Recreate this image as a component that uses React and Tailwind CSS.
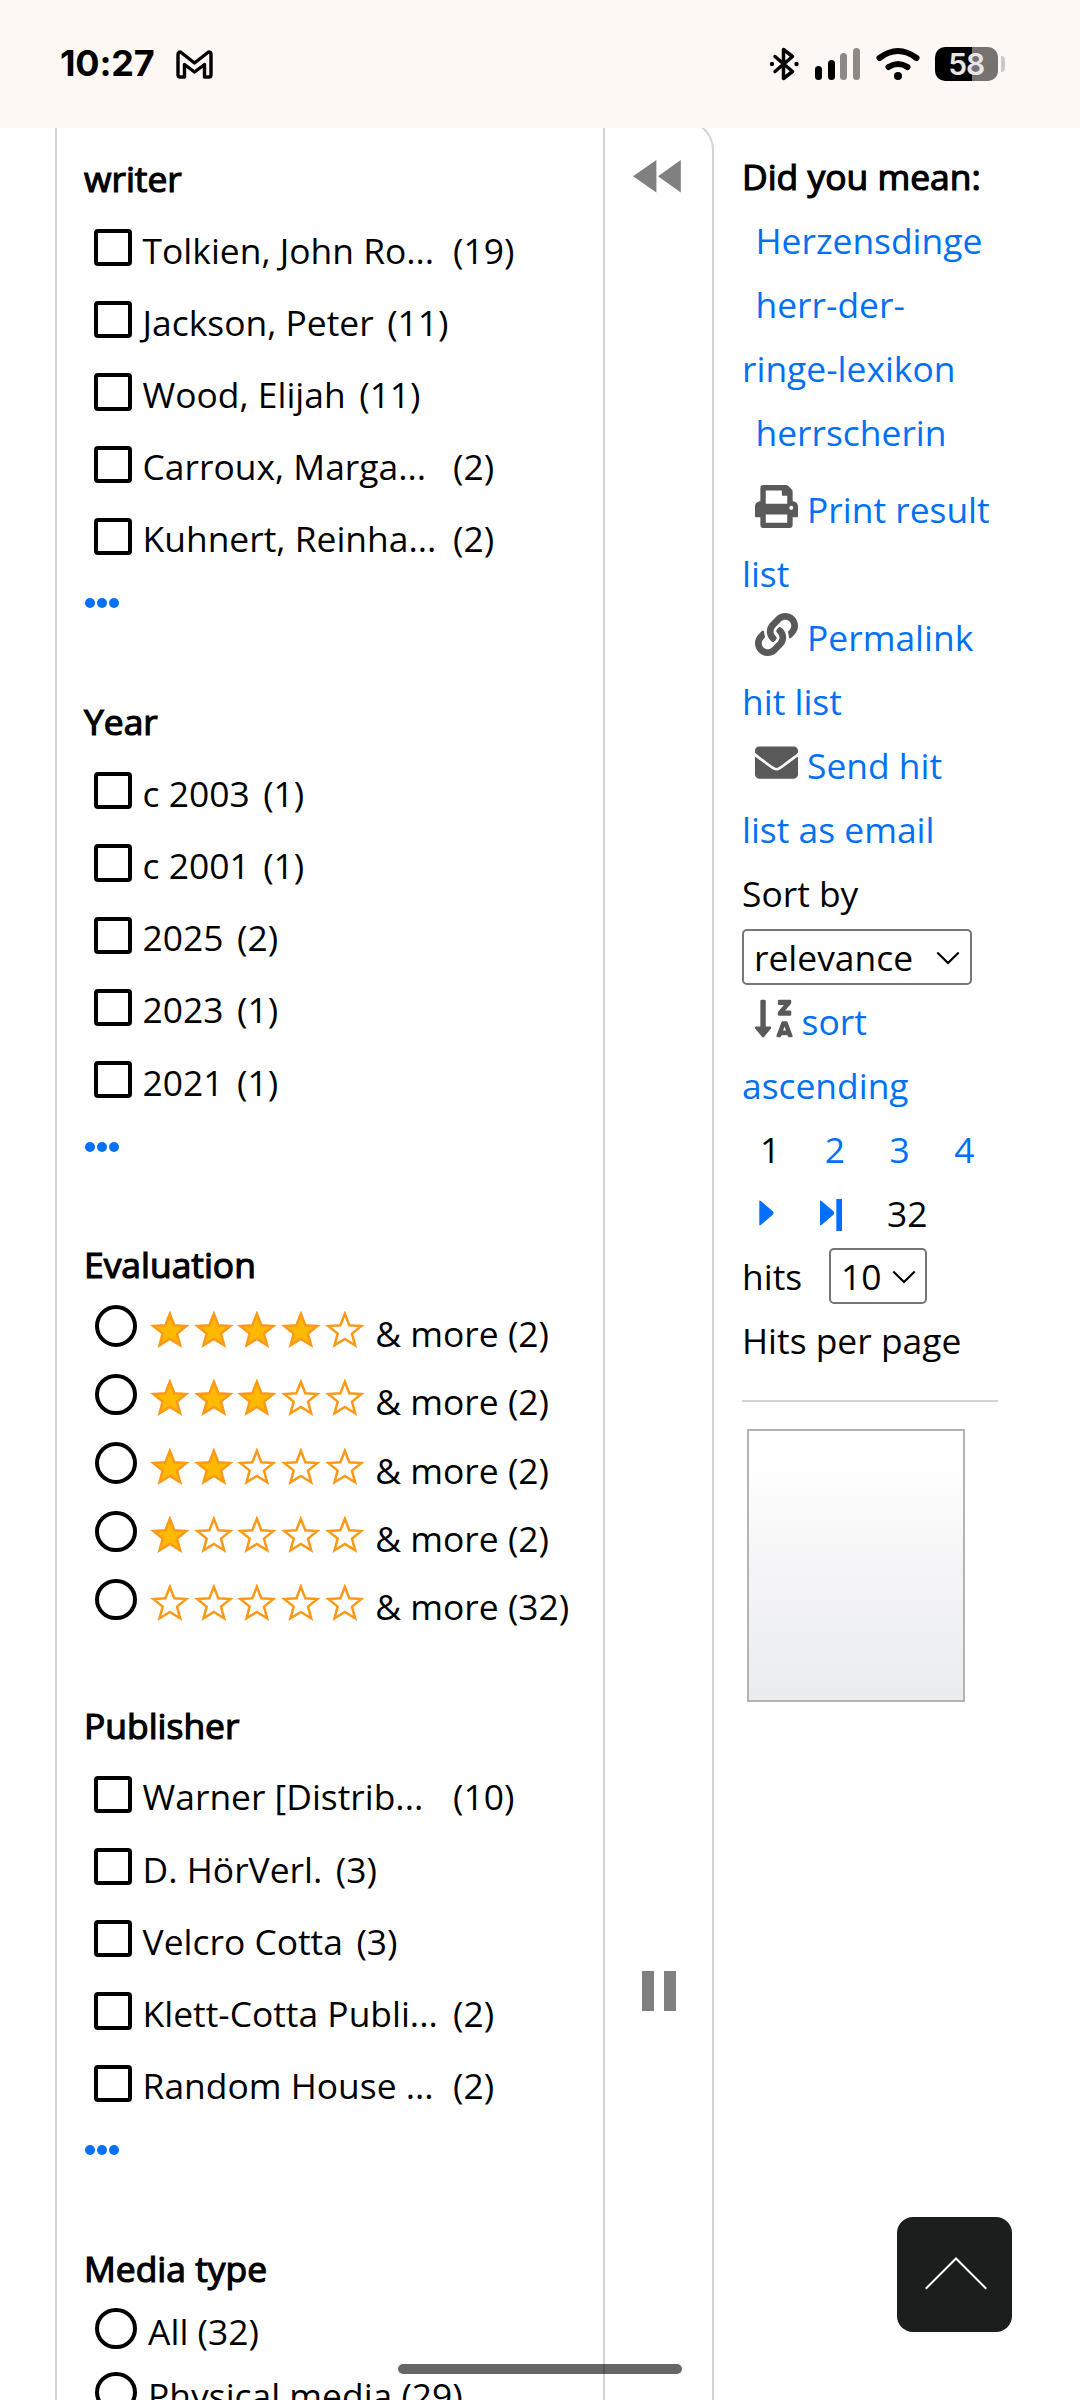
import { FaEnvelope, FaLink, FaPrint, FaSortAlphaDownAlt } from "react-icons/fa";

const writers = [
  { label: "Tolkien, John Ro...", count: 19, cut: true },
  { label: "Jackson, Peter", count: 11 },
  { label: "Wood, Elijah", count: 11 },
  { label: "Carroux, Marga...", count: 2, cut: true },
  { label: "Kuhnert, Reinha...", count: 2, cut: true },
];

const years = [
  { label: "c 2003", count: 1 },
  { label: "c 2001", count: 1 },
  { label: "2025", count: 2 },
  { label: "2023", count: 1 },
  { label: "2021", count: 1 },
];

const publishers = [
  { label: "Warner [Distrib...", count: 10, cut: true },
  { label: "D. HörVerl.", count: 3 },
  { label: "Velcro Cotta", count: 3 },
  { label: "Klett-Cotta Publi...", count: 2, cut: true },
  { label: "Random House ...", count: 2, cut: true },
];

const ratings = [[4, 2], [3, 2], [2, 2], [1, 2], [0, 32]];

function StatusBar() {
  return (
    <header className="relative z-10 flex h-[128px] shrink-0 items-start bg-[#fef8f4] pl-[60px] text-black">
      <span className="mt-[41px] w-[116px] font-[Inter] text-[36px] leading-[44px] font-bold tracking-[-0.200px]">10:27</span>
      <svg className="mt-[50px] h-[29px] w-[37px]" viewBox="0 0 37 29" fill="none" stroke="currentColor" strokeWidth="3.4" strokeLinejoin="round">
        <path d="M2 25V4.5Q2 2 4.5 2L18.5 13 32.500 2Q35 2 35 4.500V25Q35 27 33 27H28.500V14.500L18.500 22 8.500 14.500V27H4Q2 27 2 25Z" />
      </svg>
      <svg className="mt-[47px] ml-[556px] h-[34px] w-[31px]" viewBox="0 0 31 34" fill="none" stroke="currentColor" strokeWidth="3.500" strokeLinejoin="round" strokeLinecap="round">
        <path d="M6 9.500 23.500 24.500 14.500 31.500V2.500L23.500 9.500 6 24.500" />
        <circle cx="3" cy="17" r="2.200" fill="currentColor" stroke="none" />
        <circle cx="27.500" cy="17" r="2.200" fill="currentColor" stroke="none" />
      </svg>
      <div className="mt-[48px] ml-[15px] flex h-[32px] items-end gap-[5.600px]">
        <i className="h-[14px] w-[7px] rounded-full bg-black" />
        <i className="h-[20px] w-[7px] rounded-full bg-black" />
        <i className="h-[27px] w-[7px] rounded-full bg-[#8d8986]" />
        <i className="h-[32px] w-[7px] rounded-full bg-[#8d8986]" />
      </div>
      <svg className="mt-[47px] ml-[16px] h-[34px] w-[44px]" viewBox="0 0 44 34" fill="none" stroke="currentColor" strokeWidth="6" strokeLinecap="round">
        <path d="M3.500 11Q22 -3 40.500 11M12.500 20Q22 14 31.500 20" />
        <circle cx="22" cy="29" r="4" fill="currentColor" stroke="none" />
      </svg>
      <div className="mt-[47px] ml-[15px] flex h-[34px] w-[63px] items-center justify-center rounded-[10px] bg-[linear-gradient(90deg,#000_58%,#757270_58%)] font-[Inter] text-[30px] font-semibold tracking-[-1px] text-[#e6e6e6]">
        58
      </div>
      <div className="mt-[56px] ml-[3px] h-[16px] w-[4px] rounded-r-[4px] bg-[#cdc8c5]" />
    </header>
  );
}

function Title({ children }) {
  return <h2 className="h-[64px] leading-[64px] [-webkit-text-stroke:1.200px_black]">{children}</h2>;
}

function Radio({ className }) {
  return <span className={`h-[41.500px] w-[41.500px] shrink-0 rounded-full border-[4px] border-black ${className}`} />;
}

function CheckGroup({ title, items }) {
  return (
    <section className="h-[543.300px]">
      <Title>{title}</Title>
      <div className="pt-[3.800px]">
        {items.map((item) => (
          <label key={item.label} className="flex h-[72.200px] items-start pl-[10.400px] leading-[72.200px]">
            <span className="mt-[15.400px] h-[37.200px] w-[37.200px] shrink-0 rounded-[4px] border-[4px] border-black" />
            <span className={item.cut ? "ml-[11px] w-[297px]" : "ml-[11px]"}>{item.label}</span>
            <span className="ml-[13.500px]">({item.count})</span>
          </label>
        ))}
      </div>
      <div className="mt-[23.800px] flex gap-[2.200px] pl-[0.500px]">
        <i className="h-[10px] w-[10px] rounded-full bg-[#0070ff]" />
        <i className="h-[10px] w-[10px] rounded-full bg-[#0070ff]" />
        <i className="h-[10px] w-[10px] rounded-full bg-[#0070ff]" />
      </div>
    </section>
  );
}

function Star({ filled }) {
  return (
    <svg className="h-[37px] w-[43.700px]" viewBox="0 0 43.700 37">
      <path
        d="M21.850 2.800 26.300 14.200 38.400 15 29 22.600 32.200 34.300 21.850 28 11.500 34.300 14.700 22.600 5.300 15 17.400 14.200Z"
        fill={filled ? "#ffb900" : "none"}
        stroke="#fa9a17"
        strokeWidth="2.500"
      />
    </svg>
  );
}

function Filters() {
  return (
    <div className="w-[546px] pt-[23.800px] pl-[27px]">
      <CheckGroup title="writer" items={writers} />
      <CheckGroup title="Year" items={years} />
      <section className="h-[460.200px]">
        <Title>Evaluation</Title>
        <div className="pt-[2.500px]">
          {ratings.map(([stars, count]) => (
            <label key={stars} className="flex h-[68.400px] items-start pl-[11.400px] leading-[68.400px]">
              <Radio className="mt-[6.500px]" />
              <span className="mt-[12px] ml-[11px] flex">
                {[0, 1, 2, 3, 4].map((i) => <Star key={i} filled={i < stars} />)}
              </span>
              <span className="ml-[9px]">&amp; more ({count})</span>
            </label>
          ))}
        </div>
      </section>
      <CheckGroup title="Publisher" items={publishers} />
      <section>
        <Title>Media type</Title>
        {["All (32)", "Physical media (29)"].map((label) => (
          <label key={label} className="-mt-[1.300px] mb-[1.300px] flex h-[64px] items-start pl-[11.400px] leading-[64px]">
            <Radio className="mt-[9px]" />
            <span className="ml-[11.200px]">{label}</span>
          </label>
        ))}
      </section>
    </div>
  );
}

function Handle() {
  return (
    <div className="w-[109px] border-l-2 border-[#d3d3d3] text-[#808080]">
      <svg className="mt-[38px] ml-[28px] h-[33px] w-[48px]" viewBox="0 0 48 33" fill="currentColor">
        <path d="M0 16.200 23.400 0V32.400ZM25 16.200 47.800 0V32.400Z" />
      </svg>
      <div className="mt-[1778px] ml-[37px] flex gap-[10px]">
        <i className="h-[40px] w-[12px] bg-[#808080]" />
        <i className="h-[40px] w-[12px] bg-[#808080]" />
      </div>
    </div>
  );
}

function Chevron({ className }) {
  return (
    <svg className={`h-[14px] w-[24px] ${className}`} viewBox="0 0 24 14" fill="none" stroke="black" strokeWidth="2.200">
      <path d="M1.300 1.500 12 12 22.700 1.500" />
    </svg>
  );
}

function IconLink({ icon: Icon, size, text, rest }) {
  return (
    <a className="block text-[#0070f5]">
      <span className="flex items-start pl-[13px]">
        <Icon className={`mt-[8.700px] text-[#595959] ${size}`} />
        {text}
      </span>
      <span className="block">{rest}</span>
    </a>
  );
}

function Results() {
  return (
    <aside className="ml-[28px] w-[256px] pt-[24px] leading-[64px]">
      <h2 className="whitespace-nowrap [-webkit-text-stroke:1.200px_black]">Did you mean:</h2>
      <div className="mb-[12.700px] text-[#0070f5]">
        <a className="block pl-[13.500px]">Herzensdinge</a>
        <a className="block"><span className="pl-[13.500px]">herr-der-</span><br />ringe-lexikon</a>
        <a className="block pl-[13.500px]">herrscherin</a>
      </div>
      <IconLink icon={FaPrint} size="mr-[9px] h-[43px] w-[43px]" text="Print result" rest="list" />
      <IconLink icon={FaLink} size="mr-[9px] h-[43px] w-[43px]" text="Permalink" rest="hit list" />
      <IconLink icon={FaEnvelope} size="mr-[9px] h-[43px] w-[43px]" text="Send hit" rest="list as email" />
      <div className="h-[64px]">Sort by</div>
      <div className="flex h-[64px] items-center pt-[1px]">
        <button className="flex h-[56px] w-[230px] items-center rounded-[5px] border-2 border-[#767676] pl-[10px]">
          <span className="w-[182px] text-left">relevance</span>
          <Chevron className="mt-[2px]" />
        </button>
      </div>
      <IconLink icon={FaSortAlphaDownAlt} size="mr-[9px] h-[43px] w-[37.600px]" text="sort" rest="ascending" />
      <div className="flex gap-[44.500px] pl-[18px]">
        <span>1</span>
        <a className="text-[#0070f5]">2</a>
        <a className="text-[#0070f5]">3</a>
        <a className="text-[#0070f5]">4</a>
      </div>
      <div className="flex h-[64px] items-start pl-[17px]">
        <svg className="mt-[18px] h-[34px] w-[84px]" viewBox="0 0 84 34" fill="#0070ff">
          <path d="M0.300 2.500Q.300 1 1.800 2L14 12.500Q15.200 14 14 15.500L1.800 26Q.300 27 .300 25.500Z" />
          <path d="M61 2.500Q61 1 62.500 2L74.700 12.500Q75.900 14 74.700 15.500L62.500 26Q61 27 61 25.500Z" />
          <path d="M77.300 0H83V32H77.300Z" />
        </svg>
        <span className="ml-[44px]">32</span>
      </div>
      <div className="-mt-[1px] flex h-[64px] items-center">
        <span className="w-[87px]">hits</span>
        <button className="flex h-[56px] w-[98px] items-center rounded-[5px] border-2 border-[#767676] pl-[10px]">
          <span className="w-[51px] text-left">10</span>
          <Chevron className="mt-[2px]" />
        </button>
      </div>
      <div className="whitespace-nowrap">Hits per page</div>
      <hr className="mt-[28.300px] border-t-2 border-[#d3d3d3]" />
      <div className="mt-[27px] ml-[5px] h-[273px] w-[218px] border-2 border-[#b4b4b4] bg-[linear-gradient(#fff_10%,#f4f4f6_55%,#eaecee)]" />
    </aside>
  );
}

export default function App() {
  return (
    <div className="relative flex h-[2400px] w-[1080px] flex-col overflow-hidden bg-white font-['Open_Sans',sans-serif] text-[35.400px] text-black">
      <StatusBar />
      <main className="-mt-[8px] flex h-[2280px] shrink-0 items-start overflow-hidden">
        <div className="ml-[55px] flex h-[2400px] w-[659px] shrink-0 rounded-tr-[30px] border-2 border-[#d3d3d3]">
          <Filters />
          <Handle />
        </div>
        <Results />
      </main>

      {/* scroll to top */}
      <button className="absolute top-[2217px] left-[897px] flex h-[115px] w-[115px] items-start rounded-[16px] bg-[#1a1e1d] pt-[39px] pl-[27.500px]">
        <svg className="h-[35px] w-[62px]" viewBox="0 0 62 35" fill="none" stroke="white" strokeWidth="2">
          <path d="M.800 32.700 31 2.500 61.200 32.700" />
        </svg>
      </button>
      <div className="absolute top-[2364px] left-[398px] h-[10px] w-[284px] rounded-full bg-black/60" />
    </div>
  );
}
